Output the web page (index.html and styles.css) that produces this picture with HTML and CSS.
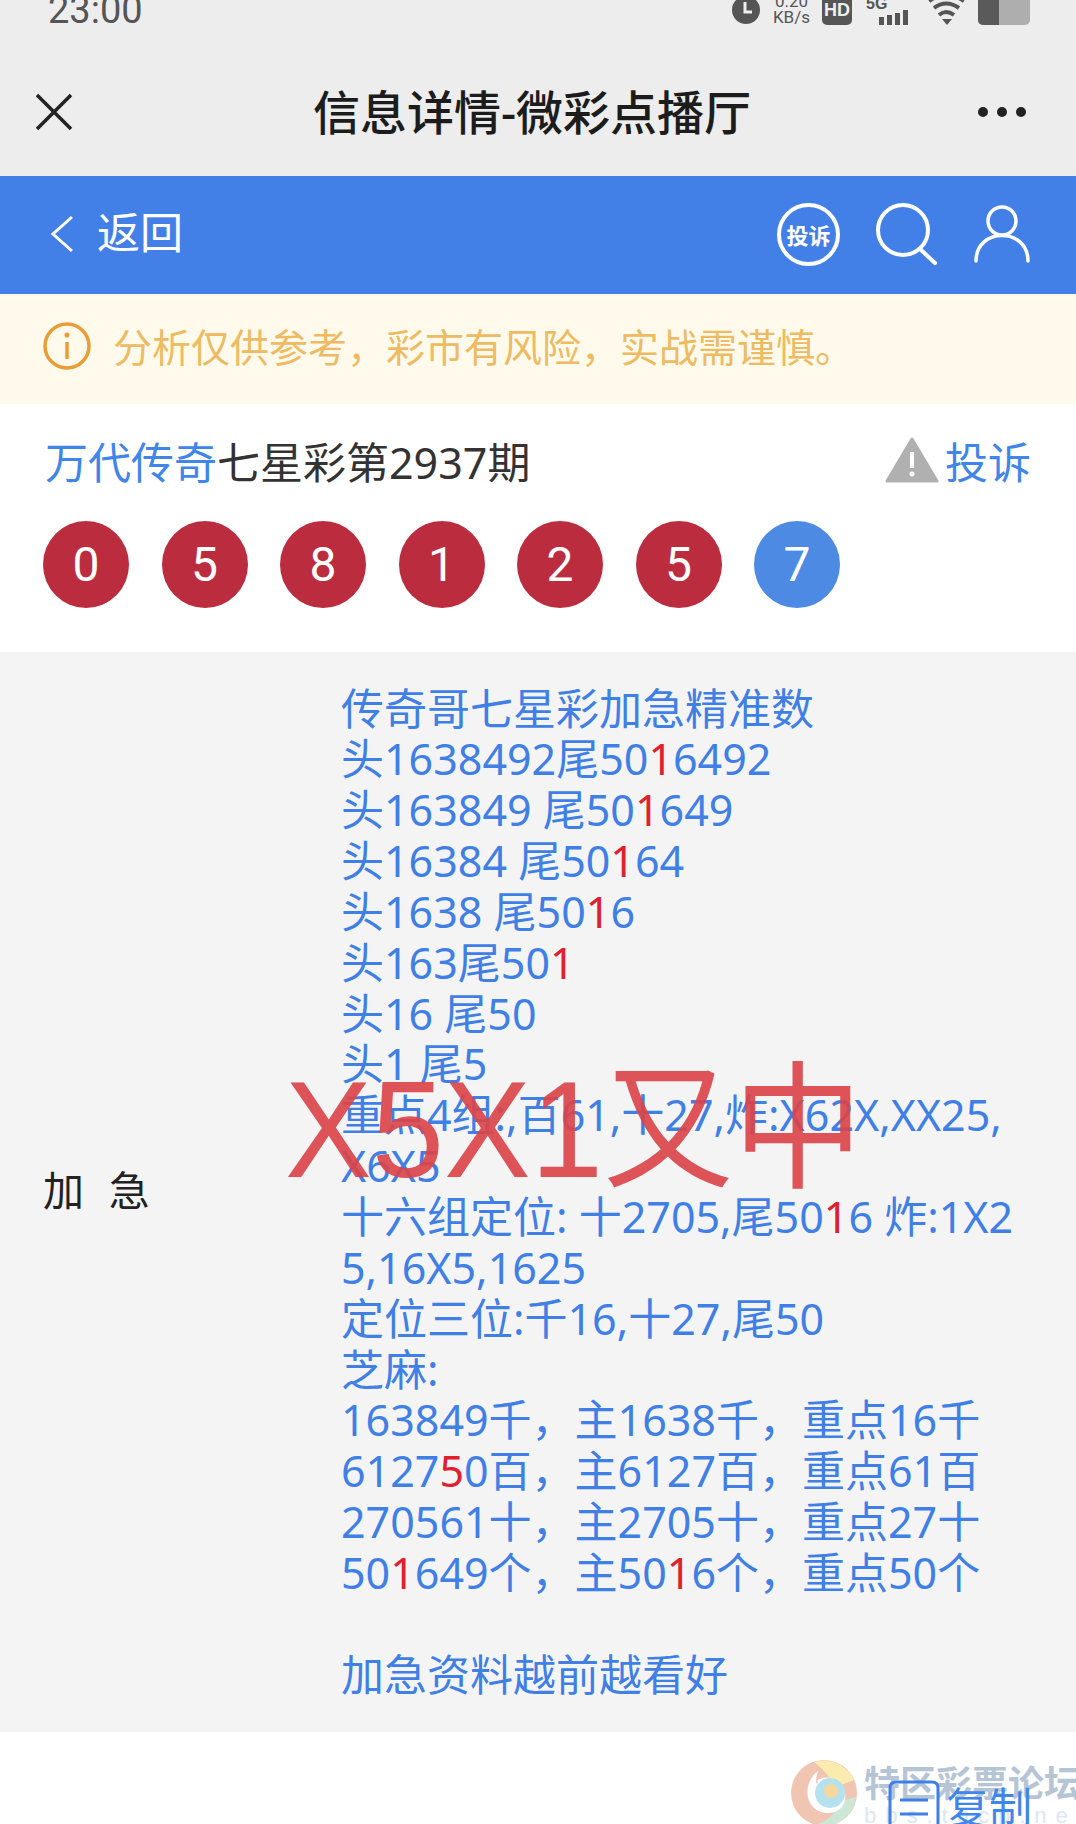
FILE: index.html
```html
<!DOCTYPE html>
<html lang="zh-CN">
<head>
    <meta charset="UTF-8">
    <meta name="viewport" content="width=device-width, initial-scale=1.0">
    <title>信息详情-微彩点播厅</title>
    <link rel="stylesheet" href="styles.css">
</head>
<body>
    <div class="topbar">
        <div class="status">
            <span class="time">23:00</span>
            <div class="status-icons">
                <svg width="30" height="32" viewBox="0 0 30 32"><circle cx="15" cy="17" r="14" fill="#555"/><path d="M14 9v10h7" fill="none" stroke="#eee" stroke-width="3"/></svg>
                <span class="speed">0.20<br>KB/s</span>
                <svg width="32" height="30" viewBox="0 0 32 30"><rect width="30" height="30" rx="5" fill="#555"/><text x="15" y="21" class="hd">HD</text></svg>
                <svg width="50" height="30" viewBox="0 0 50 30"><text x="0" y="14" class="five-g">5G</text><path d="M13 22h5v8h-5zM21 20h5v10h-5zM29 18h5v12h-5zM37 15h5v15h-5z" fill="#555"/></svg>
                <svg width="38" height="30" viewBox="0 0 38 30"><path d="M1 6Q18-6 36 6M6 13Q18 4 31 13M11 20Q18 14 26 20" fill="none" stroke="#555" stroke-width="4"/><path d="M14 24h10l-5 6z" fill="#555"/></svg>
                <div class="battery"><div class="battery-level"></div></div>
            </div>
        </div>
        <div class="nav">
            <svg width="38" height="38" viewBox="0 0 38 38"><path d="M2 2l34 34M36 2L2 36" stroke="#222" stroke-width="3.5" fill="none"/></svg>
            <h1 class="nav-title">信息详情-微彩点播厅</h1>
            <svg width="50" height="12" viewBox="0 0 50 12"><circle cx="6" cy="6" r="5" fill="#222"/><circle cx="25" cy="6" r="5" fill="#222"/><circle cx="44" cy="6" r="5" fill="#222"/></svg>
        </div>
    </div>

    <div class="header">
        <div class="back">
            <svg width="24" height="38" viewBox="0 0 24 38"><path d="M22 2L3 19l19 17" fill="none" stroke="#fff" stroke-width="3"/></svg>
            <span>返回</span>
        </div>
        <div class="header-icons">
            <div class="report-icon">投诉</div>
            <svg width="62" height="62" viewBox="0 0 62 62"><circle cx="27" cy="27" r="25" fill="none" stroke="#fff" stroke-width="4"/><path d="M44 46l15 14" stroke="#fff" stroke-width="4" stroke-linecap="round"/></svg>
            <svg width="56" height="58" viewBox="0 0 56 58"><circle cx="28" cy="16" r="14" fill="none" stroke="#fff" stroke-width="3.5"/><path d="M2 56C2 22 54 22 54 56" fill="none" stroke="#fff" stroke-width="3.5" stroke-linecap="round"/></svg>
        </div>
    </div>

    <div class="notice">
        <svg width="48" height="48" viewBox="0 0 48 48"><circle cx="24" cy="24" r="22" fill="none" stroke="#ea9d35" stroke-width="3.5"/><circle cx="24" cy="13" r="2.5" fill="#ea9d35"/><path d="M24 20v17" stroke="#ea9d35" stroke-width="3.5"/></svg>
        <span>分析仅供参考，彩市有风险，实战需谨慎。</span>
    </div>

    <div class="draw">
        <div class="draw-head">
            <div><span class="link">万代传奇</span>七星彩第2937期</div>
            <div class="report link">
                <svg width="54" height="46" viewBox="0 0 54 46"><path d="M27 2L52 44H2z" fill="#b0b0b0" stroke="#b0b0b0" stroke-width="3" stroke-linejoin="round"/><path d="M27 15v16" stroke="#fff" stroke-width="4"/><circle cx="27" cy="37" r="2.5" fill="#fff"/></svg>
                <span>投诉</span>
            </div>
        </div>
        <div class="balls">
            <span class="ball">0</span>
            <span class="ball">5</span>
            <span class="ball">8</span>
            <span class="ball">1</span>
            <span class="ball">2</span>
            <span class="ball">5</span>
            <span class="ball blue">7</span>
        </div>
    </div>

    <div class="detail">
        <div class="detail-label">加 急</div>
        <div class="detail-text">传奇哥七星彩加急精准数<br>头1638492尾50<em>1</em>6492<br>头163849 尾50<em>1</em>649<br>头16384 尾50<em>1</em>64<br>头1638 尾50<em>1</em>6<br>头163尾50<em>1</em><br>头16 尾50<br>头1 尾5<br>重点4组:,百61,十27,炸:X62X,XX25,<br>X6X5<br>十六组定位: 十2705,尾50<em>1</em>6 炸:1X2<br>5,16X5,1625<br>定位三位:千16,十27,尾50<br>芝麻:<br>163849千，主1638千，重点16千<br>6127<em>5</em>0百，主6127百，重点61百<br>270561十，主2705十，重点27十<br>50<em>1</em>649个，主50<em>1</em>6个，重点50个<br><br>加急资料越前越看好</div>
        <div class="stamp">X5X1又中</div>
    </div>

    <div class="footer">
        <div class="copy link">
            <svg width="52" height="60" viewBox="0 0 52 60"><path d="M2 60V8Q2 2 8 2h36q6 0 6 6v52" fill="none" stroke="#3f7fe6" stroke-width="3"/><path d="M12 20h28M12 34h28M12 48h20" stroke="#3f7fe6" stroke-width="3"/></svg>
            <span class="copy-text">复制</span>
        </div>
        <div class="watermark">
            <svg width="68" height="68" viewBox="0 0 68 68"><circle cx="34" cy="34" r="33" fill="#eebba5"/><path d="M24 3a33 33 0 0 1 40 18L46 28Q36 12 24 3z" fill="#f8e9a0"/><path d="M66 38a33 33 0 0 1-42 28Q42 62 52 42z" fill="#c4e3d0"/><path d="M28 12C10 26 16 54 38 54 56 54 60 34 50 24 44 18 34 16 26 22 32 22 22 32 28 12z" fill="#fff"/><circle cx="40" cy="34" r="15" fill="#a9dcec"/><circle cx="41" cy="32" r="7" fill="#f5d08c"/></svg>
            <div>
                <div class="wm-name">特区彩票论坛</div>
                <div class="wm-url">bbs.tqcp.net</div>
            </div>
        </div>
    </div>
</body>
</html>
```

FILE: styles.css
```css
* {
    box-sizing: border-box;
}

html, body {
    height: 1824px;
    overflow: hidden;
}

body {
    margin: 0;
    background-color: #fff;
    color: #333;
    font-family: "Noto Sans", "Noto Sans CJK SC", sans-serif;
    font-size: 43px;
    font-weight: 400;
}

.link {
    color: #3f85ea;
}

.topbar {
    height: 176px;
    background-color: #ededed;
}

.status {
    height: 25px;
    padding: 0 46px 0 48px;
    display: flex;
    justify-content: space-between;
    align-items: flex-end;
    overflow: hidden;
}

.time {
    font-family: Roboto, sans-serif;
    font-size: 38px;
    line-height: 30px;
    color: #555;
}

.status-icons {
    display: flex;
    align-items: flex-end;
    gap: 12px;
    height: 30px;
}

.speed {
    font-family: Roboto, sans-serif;
    font-size: 17px;
    line-height: 16px;
    text-align: center;
    color: #555;
}

.hd {
    font-family: "Liberation Sans", sans-serif;
    font-size: 18px;
    font-weight: 700;
    text-anchor: middle;
    fill: #eee;
}

.five-g {
    font-family: "Liberation Sans", sans-serif;
    font-size: 16px;
    font-weight: 700;
    fill: #555;
}

.battery {
    width: 52px;
    height: 30px;
    border-radius: 5px;
    background-color: #aeaeae;
}

.battery-level {
    width: 21px;
    height: 100%;
    border-radius: 5px 0 0 5px;
    background-color: #5a5a5a;
}

.nav {
    height: 127px;
    margin-top: 23px;
    padding: 0 49px 0 35px;
    display: flex;
    justify-content: space-between;
    align-items: center;
}

.nav-title {
    margin: -5px 0 0 14px;
    font-size: 47px;
    font-weight: 500;
    color: #1c1c1c;
}

.header {
    height: 118px;
    padding: 0 46px 2px 50px;
    background-color: #4280e8;
    color: #fff;
    display: flex;
    justify-content: space-between;
    align-items: center;
}

.back {
    display: flex;
    align-items: center;
    gap: 23px;
    line-height: 50px;
}

.back span {
    margin-top: -2px;
}

.header-icons {
    display: flex;
    align-items: center;
    gap: 36px;
}

.report-icon {
    width: 63px;
    height: 63px;
    border: 4px solid #fff;
    border-radius: 50%;
    font-size: 22px;
    font-weight: 700;
    display: flex;
    justify-content: center;
    align-items: center;
}

.notice {
    height: 110px;
    padding: 0 43px 6px;
    background-color: #fffaec;
    color: #eebb62;
    font-size: 39px;
    display: flex;
    align-items: center;
    gap: 22px;
}

.notice span {
    margin-top: -3px;
}

.draw {
    height: 248px;
    padding: 27px 45px 0 43px;
}

.draw-head {
    display: flex;
    justify-content: space-between;
    align-items: center;
    padding-left: 2px;
    height: 58px;
}

.report {
    display: flex;
    align-items: center;
    gap: 6px;
}

.balls {
    display: flex;
    gap: 32.5px;
    margin-top: 32px;
}

.ball {
    width: 86px;
    height: 87px;
    border-radius: 50%;
    background-color: #bc2c3f;
    color: #fff;
    font-family: Roboto, sans-serif;
    font-size: 48px;
    display: flex;
    justify-content: center;
    align-items: center;
}

.ball.blue {
    background-color: #4c8ae3;
}

.detail {
    position: relative;
    height: 1080px;
    background-color: #f4f4f4;
    display: flex;
    align-items: center;
}

.detail-label {
    width: 341px;
    padding-left: 43px;
    padding-bottom: 8px;
    font-size: 41px;
    word-spacing: 14px;
    color: #222;
}

.detail-text {
    color: #3f7fe6;
    line-height: 50.85px;
    white-space: nowrap;
}

.detail-text em {
    font-style: normal;
    color: #e0202e;
}

.stamp {
    position: absolute;
    left: 285px;
    top: 407px;
    font-family: "Liberation Sans", "Noto Sans CJK SC", sans-serif;
    font-size: 130px;
    line-height: 140px;
    color: rgba(218, 68, 74, 0.92);
    transform: scaleY(1.06);
    white-space: nowrap;
}

.footer {
    position: relative;
    height: 94px;
    overflow: hidden;
}

.copy {
    position: absolute;
    right: 44px;
    top: 48px;
    display: flex;
    align-items: flex-start;
    gap: 6px;
    z-index: 1;
}

.copy-text {
    margin-top: -6px;
}

.watermark {
    position: absolute;
    left: 790px;
    top: 27px;
    display: flex;
    gap: 6px;
    opacity: 0.85;
}

.wm-name {
    margin-top: 6px;
    font-size: 36px;
    font-weight: 700;
    line-height: 38px;
    color: #a9bcd0;
    white-space: nowrap;
}

.wm-url {
    font-family: "Liberation Sans", sans-serif;
    font-size: 22px;
    letter-spacing: 9px;
    color: #d5e3f5;
}
```
